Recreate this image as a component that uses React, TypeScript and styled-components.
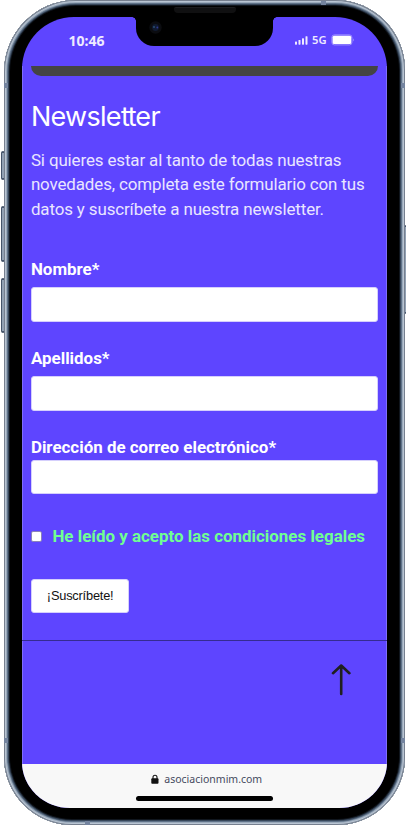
import React from 'react';
import styled, { createGlobalStyle } from 'styled-components';

const GlobalStyle = createGlobalStyle`
  * { box-sizing: border-box; }
  html, body { margin: 0; background: #fff; overflow: hidden; }
`;

const Stage = styled.div`
  position: relative;
  width: 406px;
  height: 825px;
  padding: 0 0 0 4px;
  overflow: hidden;
`;

const Chassis = styled.div`
  position: relative;
  width: 401px;
  height: 825px;
  padding: 17px 14px 17px 17.5px;
  border-radius: 72px 70px 68px 68px;
  background: #000;
  box-shadow:
    inset 0 0 0 1px #77808f,
    inset 0 0 0 2px #b9c5d3,
    inset 0 0 0 3px #9aa9ba,
    inset 0 0 0 4px #5f7288,
    inset 0 0 0 5px #38475a,
    inset 0 0 0 6px #10161e;
`;

const SideButton = styled.div<{ $side: 'left' | 'right'; $top: number; $height: number }>`
  position: absolute;
  ${(p) => p.$side}: ${(p) => (p.$side === 'left' ? '1px' : '0')};
  top: ${(p) => p.$top}px;
  width: ${(p) => (p.$side === 'left' ? 4 : 2)}px;
  height: ${(p) => p.$height}px;
  border: solid #45546a;
  border-width: 2px 0 2px 1px;
  border-radius: 2px;
  background: #92a1b3;
`;

const Antenna = styled.div<{ $x: number; $y: number; $flat?: boolean }>`
  position: absolute;
  left: ${(p) => p.$x}px;
  top: ${(p) => p.$y}px;
  width: ${(p) => (p.$flat ? 5 : 4)}px;
  height: ${(p) => (p.$flat ? 4 : 5)}px;
  background: #74849f;
`;

const Screen = styled.main`
  display: flex;
  flex-direction: column;
  width: 365.5px;
  height: 791px;
  border-radius: 52px 52px 48px 48px / 52px 52px 46px 46px;
  overflow: hidden;
  background: #5e45ff;
`;

const StatusBar = styled.header`
  display: grid;
  grid-template-columns: 114px 137px 1fr;
  flex: none;
  height: 49px;
`;

const Clock = styled.time`
  padding: 13px 0 0 47px;
  color: #eeeaff;
  font: 700 14px/22px 'Noto Sans', sans-serif;
`;

const Notch = styled.div`
  position: relative;
  height: 28.5px;
  border-radius: 0 0 18px 18px;
  background: #000;

  &::before,
  &::after {
    content: '';
    position: absolute;
    top: 0;
    width: 4px;
    height: 4px;
  }
  &::before {
    left: -4px;
    background: radial-gradient(circle at 0 100%, transparent 3.5px, #000 4px);
  }
  &::after {
    right: -4px;
    background: radial-gradient(circle at 100% 100%, transparent 3.5px, #000 4px);
  }
`;

const Speaker = styled.div`
  position: absolute;
  top: 7px;
  left: 170px;
  width: 62px;
  height: 6px;
  border-radius: 2px 2px 4px 4px;
  background: #101011;
  border-top: 1px solid #1c1c1e;
`;

const Camera = styled.svg`
  position: absolute;
  left: 12px;
  top: 3px;
`;

const Signals = styled.div`
  display: flex;
  gap: 4px;
  padding: 12px 0 0 22.5px;
  height: 34px;
  align-items: center;
  color: #eeeaff;
  font: 600 11.2px/22px 'Noto Sans', sans-serif;
`;

const Page = styled.section`
  display: flex;
  flex-direction: column;
  flex: none;
  height: 698px;
  box-shadow: inset 1px 0 0 #7f6dfb, inset -1px 0 0 #7f6dfb;
  font-family: Roboto, sans-serif;
  color: #fff;
`;

const CardEdge = styled.div`
  flex: none;
  height: 10.4px;
  margin: 0 9px 0 9.5px;
  border-radius: 0 0 11px 11px;
  background: #444;
`;

const Content = styled.div`
  flex: none;
  height: 564.6px;
  padding: 25px 9px 0 9.4px;
  border-bottom: 1px solid #352b91;
`;

const Title = styled.h1`
  height: 32px;
  margin: 0;
  font: 400 27px/32px Inter, sans-serif;
  letter-spacing: -0.7px;
`;

const Ligature = styled.span`
  letter-spacing: -1.3px;
`;

const Intro = styled.p`
  margin: 14.5px 0 0;
  color: #e9e5ff;
  font-size: 16.93px;
  font-weight: 400;
  letter-spacing: -0.12px;
  line-height: 24.5px;
  white-space: nowrap;
`;

const Form = styled.form`
  display: flex;
  flex-direction: column;
  margin-top: 35.5px;
`;

const Field = styled.label<{ $gap: number; $after: number }>`
  display: flex;
  flex-direction: column;
  gap: ${(p) => p.$gap}px;
  margin-bottom: ${(p) => p.$after}px;
  font-size: 16.93px;
  font-weight: 700;
  line-height: 24.5px;
  white-space: nowrap;
`;

const Input = styled.input`
  width: 347.5px;
  height: 34.5px;
  padding: 0 8px;
  border: 1px solid #d5cffc;
  border-radius: 3px;
  background: #fff;
  outline: none;
`;

const Consent = styled.label`
  display: flex;
  align-items: center;
  gap: 10.5px;
  height: 24px;
  color: #70ff92;
  font-size: 16.93px;
  font-weight: 700;
  white-space: nowrap;
`;

const Checkbox = styled.input`
  appearance: none;
  width: 11px;
  height: 11px;
  margin: 0;
  border: 1px solid #8b83b8;
  border-radius: 2px;
  background: #fff;
`;

const Submit = styled.button`
  width: 98.5px;
  height: 34.5px;
  margin-top: 30.5px;
  padding: 0 0 1px;
  border: 1px solid #d5cffc;
  border-radius: 3px;
  background: #fff;
  color: #111;
  font: 12.8px 'Liberation Sans', Arial, sans-serif;
  letter-spacing: -0.2px;
`;

const Footer = styled.footer`
  display: flex;
  justify-content: flex-end;
  padding: 22px 36px 0 0;
`;

const BrowserBar = styled.div`
  display: flex;
  flex-direction: column;
  align-items: center;
  flex: none;
  height: 44px;
  padding-top: 6px;
  background: #f8f8f8;
`;

const Address = styled.div`
  display: flex;
  align-items: center;
  gap: 5px;
  height: 18px;
  margin-left: 5px;
  color: #454a60;
  font: 10.5px/18px 'Noto Sans', sans-serif;
`;

const HomeIndicator = styled.div`
  width: 137px;
  height: 4.6px;
  margin-top: 8.4px;
  border-radius: 3px;
  background: #000;
`;

const fields = [
  { id: 'nombre', label: 'Nombre*', gap: 6, after: 24 },
  { id: 'apellidos', label: 'Apellidos*', gap: 6, after: 24 },
  { id: 'correo', label: 'Dirección de correo electrónico*', gap: 0.5, after: 30 },
];

function SignalIcon() {
  return (
    <svg width="13" height="9" viewBox="0 0 13 9" fill="#eeeaff">
      <rect x="0" y="5.5" width="2" height="3.2" rx=".6" />
      <rect x="3.5" y="4" width="2" height="4.7" rx=".6" />
      <rect x="7" y="2.2" width="2" height="6.5" rx=".6" />
      <rect x="10.5" y="0.2" width="2" height="8.5" rx=".6" />
    </svg>
  );
}

function BatteryIcon() {
  return (
    <svg width="24" height="12" viewBox="0 0 24 12">
      <rect x=".9" y=".9" width="20" height="10" rx="2.4" fill="none" stroke="#a99cff" strokeWidth=".9" />
      <rect x="1.6" y="1.8" width="18.6" height="8.2" rx="1.5" fill="#fff" />
      <path d="M22 4.2q1.5 1.7 0 3.4z" fill="#b4a9ff" />
    </svg>
  );
}

export default function App() {
  return (
    <>
      <GlobalStyle />
      <Stage>
        <SideButton $side="left" $top={151} $height={29} />
        <SideButton $side="left" $top={206} $height={56} />
        <SideButton $side="left" $top={278} $height={55} />
        <SideButton $side="right" $top={225} $height={89} />
        <Chassis>
          <Antenna $x={0} $y={83} />
          <Antenna $x={397} $y={83} />
          <Antenna $x={0} $y={738} />
          <Antenna $x={397} $y={738} />
          <Antenna $x={317} $y={1} $flat />
          <Antenna $x={81} $y={821} $flat />
          <Speaker />
          <Screen>
            <StatusBar>
              <Clock>10:46</Clock>
              <Notch>
                <Camera width="15" height="15" viewBox="0 0 15 15">
                  <circle cx="7.5" cy="7.5" r="6.2" fill="#0b0c10" />
                  <circle cx="7.5" cy="7.5" r="3.4" fill="#101a30" />
                  <circle cx="6" cy="7" r="1.1" fill="#274a70" />
                  <circle cx="9.3" cy="7.5" r=".9" fill="#303891" />
                </Camera>
              </Notch>
              <Signals>
                <SignalIcon />
                <span>5G</span>
                <BatteryIcon />
              </Signals>
            </StatusBar>
            <Page>
              <CardEdge />
              <Content>
                <Title>
                  Newsle<Ligature>tt</Ligature>er
                </Title>
                <Intro>
                  Si quieres estar al tanto de todas nuestras
                  <br />
                  novedades, completa este formulario con tus
                  <br />
                  datos y suscríbete a nuestra newsletter.
                </Intro>
                <Form>
                  {fields.map((f) => (
                    <Field key={f.id} $gap={f.gap} $after={f.after}>
                      {f.label}
                      <Input name={f.id} />
                    </Field>
                  ))}
                  <Consent>
                    <Checkbox type="checkbox" />
                    He leído y acepto las condiciones legales
                  </Consent>
                  <Submit type="button">¡Suscríbete!</Submit>
                </Form>
              </Content>
              <Footer>
                <svg width="20" height="33" viewBox="0 0 20 33" fill="none" stroke="#202020" strokeWidth="2.6" strokeLinecap="round" strokeLinejoin="round">
                  <path d="M10.2 31V2.5M2 10.2L10.2 2.5L18.4 10.2" />
                </svg>
              </Footer>
            </Page>
            <BrowserBar>
              <Address>
                <svg width="8" height="10" viewBox="0 0 8 10">
                  <path d="M2 5V3.2a2 2 0 0 1 4 0V5" fill="none" stroke="#111" strokeWidth="1.1" />
                  <rect x=".3" y="4.3" width="7.2" height="5.4" rx=".9" fill="#111" />
                </svg>
                asociacionmim.com
              </Address>
              <HomeIndicator />
            </BrowserBar>
          </Screen>
        </Chassis>
      </Stage>
    </>
  );
}
